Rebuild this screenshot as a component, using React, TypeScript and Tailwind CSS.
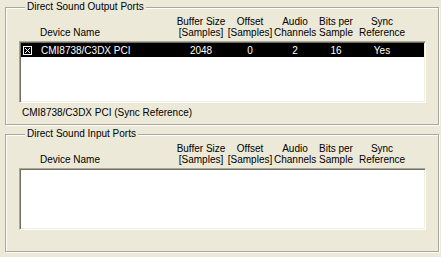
const COLS = [
  { top: "Buffer Size", bottom: "[Samples]", w: "w-[50px]" },
  { top: "Offset", bottom: "[Samples]", w: "w-[48px]" },
  { top: "Audio", bottom: "Channels", w: "w-[42px]" },
  { top: "Bits per", bottom: "Sample", w: "w-[40px]" },
  { top: "Sync", bottom: "Reference", w: "w-[52px]" },
];

type Row = { name: string; values: string[] };

function CheckMark() {
  return (
    <svg width="9" height="9" viewBox="0 0 9 9" className="shrink-0">
      <rect x="0.5" y="0.5" width="8" height="8" fill="none" stroke="white" />
      <path d="M2 2 L7 7 M7 2 L2 7" stroke="white" strokeWidth="1" />
    </svg>
  );
}

function PortGroup({ title, rows, status }: { title: string; rows: Row[]; status: string }) {
  return (
    <fieldset className="border border-[#aca899] shadow-[1px_1px_0_#ffffff,inset_1px_1px_0_#ffffff] pl-[13px] pr-[12px] pb-[5px]">
      <legend className="ml-[6px] px-[2px] leading-[14px] bg-[#ece9d8]">{title}</legend>
      <div className="flex items-end pt-[2px] leading-[11px]">
        <div className="w-[102px] text-center">Device Name</div>
        <div className="w-[55px]" />
        {COLS.map((c) => (
          <div key={c.top} className={`${c.w} text-center whitespace-nowrap`}>
            <div>{c.top}</div>
            <div>{c.bottom}</div>
          </div>
        ))}
      </div>
      <div className="mt-[3px] h-[62px] bg-white border border-t-[#aca899] border-l-[#aca899] border-b-white border-r-white shadow-[inset_1px_1px_0_#716f64,inset_-1px_-1px_0_#f1efe2] p-[1px]">
        {rows.map((r) => (
          <div key={r.name} className="flex items-center h-[14px] bg-black text-white">
            <div className="w-[100px] flex items-center pl-[2px] gap-[9px] whitespace-nowrap">
              <CheckMark />
              <span>{r.name}</span>
            </div>
            <div className="w-[55px]" />
            {COLS.map((c, i) => (
              <div key={c.top} className={`${c.w} text-center`}>
                {r.values[i]}
              </div>
            ))}
          </div>
        ))}
      </div>
      <div className="mt-[3px] h-[13px] leading-[13px] pl-[3px]">{status}</div>
    </fieldset>
  );
}

export default function App() {
  return (
    <div className="w-[441px] h-[257px] bg-[#ece9d8] pl-[5px] pr-[2px] text-[10px] text-black [font-family:'Liberation_Sans',Arial,sans-serif] overflow-hidden">
      <PortGroup
        title="Direct Sound Output Ports"
        rows={[{ name: "CMI8738/C3DX PCI", values: ["2048", "0", "2", "16", "Yes"] }]}
        status="CMI8738/C3DX PCI (Sync Reference)"
      />
      <div className="h-[2px]" />
      <PortGroup title="Direct Sound Input Ports" rows={[]} status="" />
    </div>
  );
}
